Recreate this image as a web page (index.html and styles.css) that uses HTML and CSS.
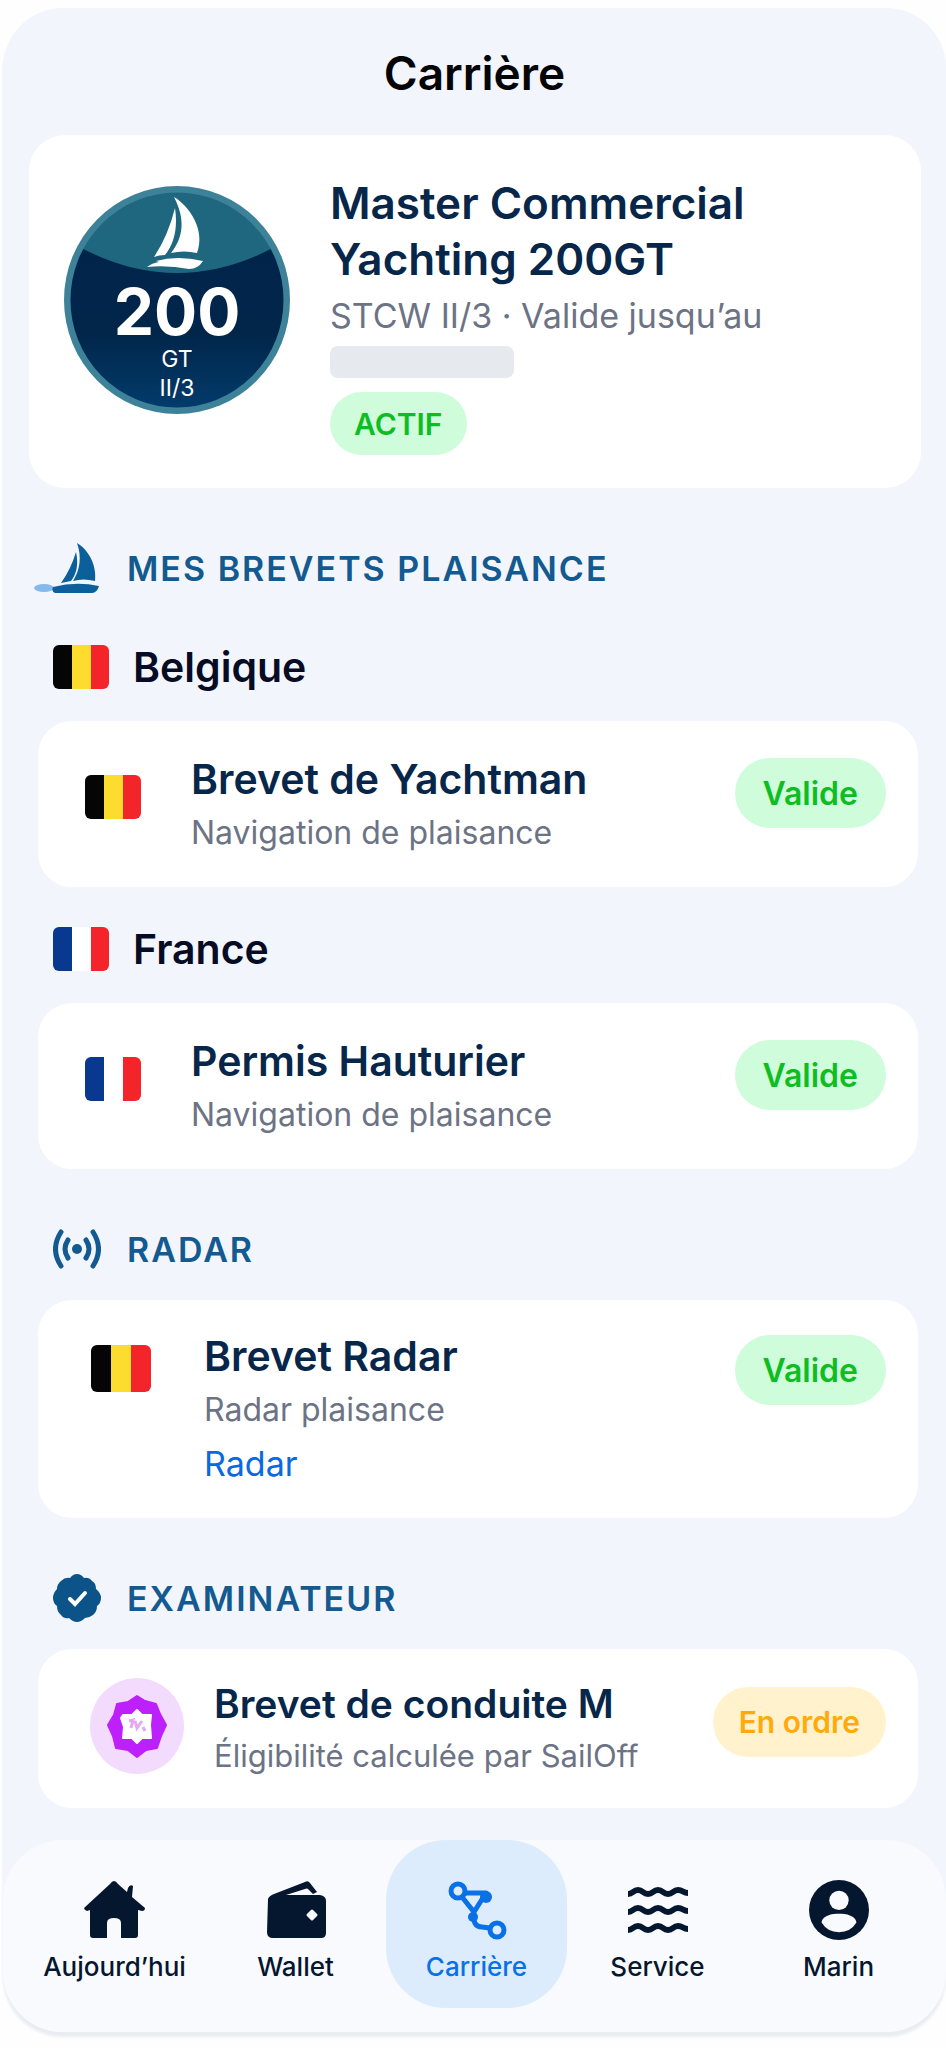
FILE: index.html
```html
<!DOCTYPE html>
<html lang="fr">
<head>
  <meta charset="UTF-8" />
  <meta name="viewport" content="width=device-width, initial-scale=1.0"/>
  <title>SailOff - Carrière</title>
  <link rel="stylesheet" href="styles.css">
</head>
<body>
  <div class="screen">
    <h1>Carrière</h1>

    <main>
      <section class="hero">
        <svg class="badge" viewBox="0 0 226 228" role="img" aria-label="200 GT II/3">
          <defs>
            <linearGradient id="sea" x1="0" y1="0" x2="0" y2="1">
              <stop offset="0.3" stop-color="#01244b"/>
              <stop offset="0.65" stop-color="#01264a"/>
              <stop offset="1" stop-color="#033d6e"/>
            </linearGradient>
            <clipPath id="disc"><ellipse cx="113" cy="114" rx="108" ry="109"/></clipPath>
          </defs>
          <ellipse cx="113" cy="114" rx="113" ry="114" fill="#3d8299"/>
          <g clip-path="url(#disc)">
            <rect width="226" height="228" fill="url(#sea)"/>
            <path d="M0 0H226V52Q170 87 113 87Q56 87 0 52Z" fill="#1f667f"/>
          </g>
          <ellipse cx="113" cy="114" rx="109" ry="110" fill="none" stroke="#3d8299" stroke-width="5"/>
          <path d="M110 11C125 20 142 44 133 67Q120 64 107 67C119 52 122 34 110 11Z" fill="#fff"/>
          <path d="M111 22C114 42 110 58 101 69Q95 69 90 71Q104 50 111 22Z" fill="#fff"/>
          <path d="M92 75Q113 69 139 75Q134 83 125 83Q104 79 83 81Q88 77 95 76Z" fill="#fff"/>
          <text class="badge-number" x="113" y="149">200</text>
          <text class="badge-unit" x="113" y="181">GT</text>
          <text class="badge-unit" x="113" y="210">II/3</text>
        </svg>
        <div class="hero-text">
          <h2>Master Commercial Yachting 200GT</h2>
          <p class="sub">STCW II/3 · Valide jusqu’au</p>
          <div class="hidden-date"></div>
          <span class="pill pill-small">ACTIF</span>
        </div>
      </section>

      <section>
        <h2 class="section-title">
          <span class="section-icon">
            <svg width="70" height="50" viewBox="0 0 70 50">
              <ellipse cx="13" cy="45" rx="10" ry="4" fill="#84b9ea"/>
              <path d="M46 0C58 7 66 23 64 38Q52 35 42 38C49 27 51 14 46 0Z" fill="#0b5f9b"/>
              <path d="M45 9C48 22 45 32 40 38L30 40Q40 26 45 9Z" fill="#0b5f9b"/>
              <path d="M22 44Q45 38 68 43Q66 50 61 50H24Q20 48 22 44Z" fill="#0b5f9b"/>
            </svg>
          </span>
          MES BREVETS PLAISANCE
        </h2>

        <h3 class="country"><span class="flag flag-be"></span>Belgique</h3>
        <article class="card">
          <div class="media"><span class="flag flag-be"></span></div>
          <div class="info">
            <h4>Brevet de Yachtman</h4>
            <p class="sub">Navigation de plaisance</p>
          </div>
          <span class="pill">Valide</span>
        </article>

        <h3 class="country country-next"><span class="flag flag-fr"></span>France</h3>
        <article class="card">
          <div class="media"><span class="flag flag-fr"></span></div>
          <div class="info">
            <h4>Permis Hauturier</h4>
            <p class="sub">Navigation de plaisance</p>
          </div>
          <span class="pill">Valide</span>
        </article>
      </section>

      <section>
        <h2 class="section-title">
          <span class="section-icon">
            <svg width="48" height="40" viewBox="0 0 48 40" fill="none" stroke="#135a90" stroke-width="5" stroke-linecap="round">
              <circle cx="24" cy="20" r="5" fill="#135a90" stroke="none"/>
              <path d="M15 11Q9 20 15 29M33 11Q39 20 33 29M8 3Q-3 20 8 37M40 3Q51 20 40 37"/>
            </svg>
          </span>
          RADAR
        </h2>
        <article class="card card-radar">
          <div class="media"><span class="flag flag-be"></span></div>
          <div class="info">
            <h4>Brevet Radar</h4>
            <p class="sub">Radar plaisance</p>
            <a href="#radar">Radar</a>
          </div>
          <span class="pill">Valide</span>
        </article>
      </section>

      <section>
        <h2 class="section-title">
          <span class="section-icon">
            <svg width="48" height="48" viewBox="0 0 48 48">
              <path d="M24 0Q28 0 31 4Q36 3 39 7Q43 9 43 15Q48 19 48 24Q48 29 44 32Q44 38 40 41Q36 44 32 44Q28 48 24 48Q20 48 16 44Q11 45 8 41Q4 38 4 32Q0 29 0 24Q0 19 4 15Q4 10 8 7Q12 3 17 4Q20 0 24 0Z" fill="#0b5389"/>
              <path d="M17 25L22 30L32 19" fill="none" stroke="#fff" stroke-width="4" stroke-linecap="round"/>
            </svg>
          </span>
          EXAMINATEUR
        </h2>
        <article class="card card-exam">
          <div class="media">
            <svg width="94" height="96" viewBox="0 0 94 96">
              <ellipse cx="47" cy="48" rx="47" ry="48" fill="#f2dbfd"/>
              <path d="M47 18L55 23L66 26L70 36L76 47L71 58L67 70L56 72L47 79L38 72L26 70L23 58L18 47L24 37L27 26L38 24Z" fill="#be20fb" stroke="#be20fb" stroke-width="2" stroke-linejoin="round"/>
              <path d="M47 32L52 37L61 37L60 47L61 60L52 60L47 65L42 60L33 60L34 49L31 40L33 37L42 37Z" fill="#fff" stroke="#fff" stroke-width="2" stroke-linejoin="round"/>
              <path d="M39 43L43 42L41 50M45 43L47 50L52 43M53 49L55 53" fill="none" stroke="#e3a9f5" stroke-width="3"/>
            </svg>
          </div>
          <div class="info">
            <h4>Brevet de conduite M</h4>
            <p class="sub">Éligibilité calculée par SailOff</p>
          </div>
          <span class="pill pill-orange">En ordre</span>
        </article>
      </section>
    </main>

    <nav>
      <a href="#today">
        <svg width="62" height="60" viewBox="0 0 62 60" fill="#04172f">
          <path d="M30 1Q32 1 34 4L43 12L44 8Q46 4 49 6L48 17L61 28Q61 31 58 31L54 30V55Q54 58 51 58H37V43Q37 38 30 38Q23 38 23 43V58H9Q6 58 6 55V30L3 31Q0 30 0 28L26 4Q28 1 30 1Z"/>
        </svg>
        Aujourd’hui
      </a>
      <a href="#wallet">
        <svg width="60" height="60" viewBox="0 0 60 60" fill="#04172f">
          <path d="M2 19Q3 16 8 14L39 2Q42 0 44 3L51 12L47 14L42 9Q41 8 39 9L20 15H54Q60 16 60 21V53Q60 58 55 58H7Q1 58 1 52Z"/>
          <path d="M46 31L50 35L46 39L42 35Z" fill="#f9fafe" stroke="#f9fafe" stroke-width="3" stroke-linejoin="round"/>
        </svg>
        Wallet
      </a>
      <a href="#career" class="active" aria-current="page">
        <svg width="60" height="60" viewBox="0 0 60 60" fill="none" stroke="#0970e6" stroke-width="5">
          <circle cx="11" cy="11" r="7"/>
          <circle cx="50" cy="50" r="7"/>
          <path d="M18 13H39L27 32L15 17M27 32Q25 47 35 47L43 48" stroke-linejoin="round"/>
          <circle cx="39" cy="17" r="6" fill="#0970e6" stroke="none"/>
          <circle cx="26" cy="37" r="5" fill="#0970e6" stroke="none"/>
        </svg>
        Carrière
      </a>
      <a href="#service">
        <svg width="62" height="60" viewBox="0 0 62 60" fill="none" stroke="#04172f" stroke-width="6">
          <path d="M1 14C6 14 6 10 11 10S16 14 21 14S26 10 31 10S36 14 41 14S46 10 51 10S56 13 61 13"/>
          <path d="M1 32C6 32 6 28 11 28S16 32 21 32S26 28 31 28S36 32 41 32S46 28 51 28S56 31 61 31"/>
          <path d="M1 50C6 50 6 46 11 46S16 50 21 50S26 46 31 46S36 50 41 50S46 46 51 46S56 49 61 49"/>
        </svg>
        Service
      </a>
      <a href="#sailor">
        <svg width="62" height="62" viewBox="0 0 62 62">
          <circle cx="31" cy="31" r="31" fill="#04172f"/>
          <circle cx="31" cy="21" r="10" fill="#f9fafe"/>
          <path d="M31 35C41 34 49 39 49 44Q43 54 31 54Q19 54 13 44C13 39 21 34 31 35Z" fill="#f9fafe"/>
        </svg>
        Marin
      </a>
    </nav>
  </div>
</body>
</html>
```
FILE: styles.css
```css
* {
  box-sizing: border-box;
}
body {
  margin: 0;
  padding: 8px 0 14px 3px;
  background: #fefefe;
  font-family: Inter, 'Liberation Sans', sans-serif;
  color: #06264a;
}
h1, h2, h3, h4, p {
  margin: 0;
  font-weight: 600;
}
svg {
  display: block;
  flex-shrink: 0;
}
.screen {
  background: #f2f5fb;
  border-radius: 60px;
  padding-top: 37px;
  box-shadow: 0 5px 3px #eaecf2;
}
h1 {
  font-size: 46px;
  line-height: 56px;
  text-align: center;
  color: #040507;
}
main {
  padding: 34px 25px 32px 26px;
}

/* main licence */
.hero {
  display: flex;
  gap: 40px;
  background: #fff;
  border-radius: 36px;
  padding: 40px 32px 33px 35px;
}
.badge {
  width: 226px;
  height: 228px;
  margin-top: 11px;
}
.badge text {
  fill: #fff;
  text-anchor: middle;
}
.badge-number {
  font-size: 64px;
  font-weight: 700;
}
.badge-unit {
  font-size: 23px;
}
.hero-text {
  flex: 1;
  max-width: 480px;
}
.hero-text h2 {
  font-size: 44px;
  line-height: 56px;
}
.sub {
  font-size: 32px;
  line-height: 54px;
  font-weight: 400;
  color: #6c7385;
}
.hero-text .sub {
  font-size: 34px;
  line-height: 58px;
}
.hidden-date {
  width: 184px;
  height: 32px;
  margin: 1px 0 14px;
  border-radius: 8px;
  background: #e6eaef;
}

/* status labels */
.pill {
  display: flex;
  align-items: center;
  height: 70px;
  margin-top: 6px;
  padding: 0 28px;
  border-radius: 35px;
  background: #cffcdb;
  color: #0fbd23;
  font-size: 32px;
  font-weight: 600;
  white-space: nowrap;
}
.pill-small {
  display: inline-flex;
  height: 63px;
  margin: 0;
  padding: 0 24px;
  font-size: 30px;
}
.pill-orange {
  margin-top: 9px;
  padding: 0 26px;
  background: #fff2cc;
  color: #ffaa0c;
  font-size: 30px;
}

/* sections */
.section-title {
  display: flex;
  align-items: center;
  gap: 26px;
  height: 50px;
  margin: 55px 0 26px;
  font-size: 34px;
  letter-spacing: 2px;
  color: #135a90;
}
.section-icon {
  display: flex;
  justify-content: flex-end;
  width: 72px;
}
.country {
  display: flex;
  align-items: center;
  gap: 24px;
  margin: 46px 0 26px 24px;
  font-size: 41px;
  line-height: 56px;
  color: #050c24;
}
.country-next {
  margin-top: 34px;
}
.flag {
  width: 56px;
  height: 44px;
  border-radius: 6px;
}
.flag-be {
  background: linear-gradient(90deg, #050505 34%, #fddc30 34% 67%, #f4242b 67%);
}
.flag-fr {
  background: linear-gradient(90deg, #08398f 34%, #fff 34% 67%, #f4242b 67%);
}
.card {
  display: flex;
  align-items: flex-start;
  margin: 0 3px 0 9px;
  padding: 31px 32px 27px 47px;
  background: #fff;
  border-radius: 34px;
}
.media {
  width: 106px;
}
.card .flag {
  display: block;
  margin-top: 23px;
}
.info {
  flex: 1;
}
.info h4 {
  font-size: 41px;
  line-height: 54px;
}
.info a {
  display: block;
  font-size: 34px;
  line-height: 54px;
  color: #0969df;
  text-decoration: none;
}
.card-radar {
  padding-top: 29px;
  padding-left: 53px;
}
.card-radar .media {
  width: 113px;
}
.card-radar .flag {
  width: 60px;
  height: 47px;
  margin-top: 16px;
}
.card-exam {
  padding: 29px 32px 26px 52px;
}
.card-exam .media {
  width: 124px;
}
.card-exam h4 {
  font-size: 39px;
  line-height: 52px;
}
.card-exam .sub {
  font-size: 31px;
  line-height: 52px;
}

/* bottom bar */
nav {
  display: grid;
  grid-template-columns: repeat(5, 1fr);
  padding: 0 17px 24px 21px;
  background: #f9fafe;
  border-radius: 60px;
}
nav a {
  display: flex;
  flex-direction: column;
  align-items: center;
  gap: 9px;
  padding: 40px 0 23px;
  border-radius: 60px;
  font-size: 26px;
  line-height: 36px;
  font-weight: 500;
  color: #04172f;
  text-decoration: none;
}
nav svg {
  height: 60px;
}
nav .active {
  background: #dcecfc;
  color: #0970e6;
}
```
